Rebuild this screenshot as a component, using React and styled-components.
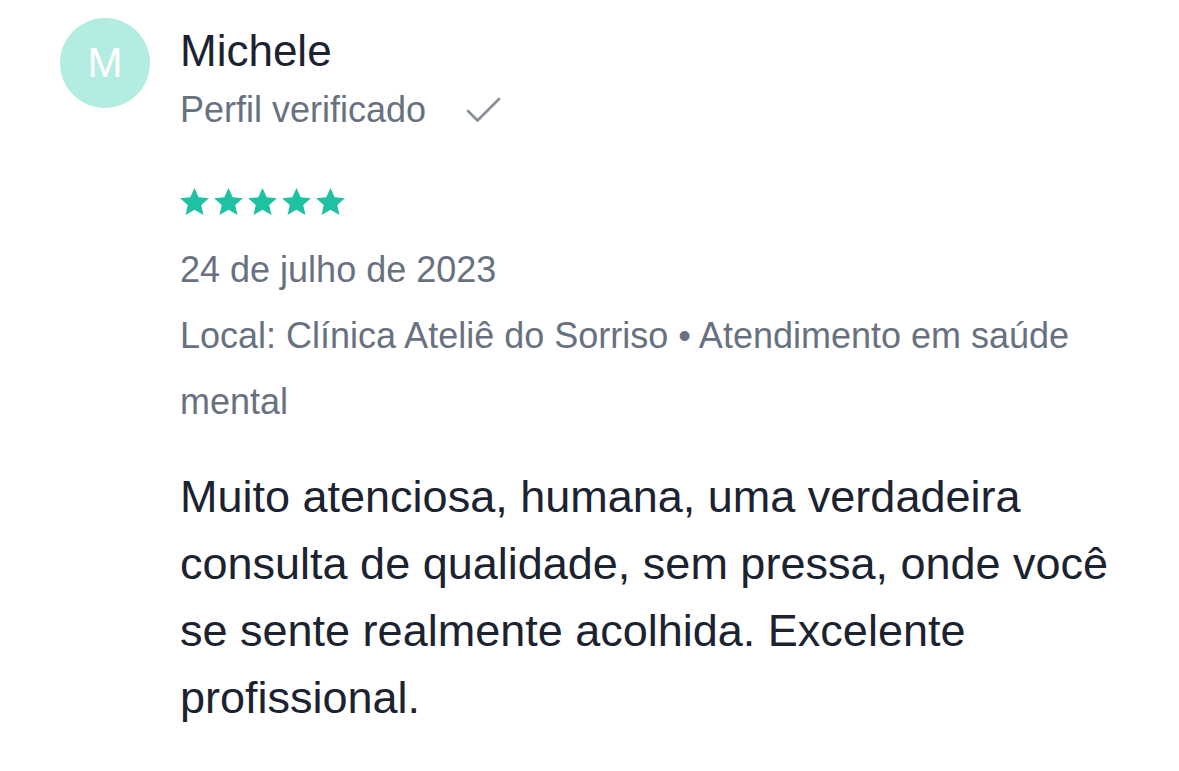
import React from "react";
import styled, { createGlobalStyle } from "styled-components";

const Global = createGlobalStyle`
  html, body { margin: 0; padding: 0; background: #ffffff; }
  body { font-family: "Liberation Sans", Arial, Helvetica, sans-serif; }
`;

const Card = styled.div`
  display: flex;
  gap: 30px;
  padding: 18px 39px 0 60px;
  width: 1179px;
  box-sizing: border-box;
`;

const Avatar = styled.div`
  flex: 0 0 90px;
  width: 90px;
  height: 90px;
  border-radius: 50%;
  background: #b3ece1;
  color: #ffffff;
  display: flex;
  align-items: center;
  justify-content: center;
  font-size: 42px;
  line-height: 1;
`;

const Body = styled.div`
  display: flex;
  flex-direction: column;
  flex: 1;
  min-width: 0;
`;

const Name = styled.div`
  font-size: 44px;
  line-height: 50px;
  color: #1b2230;
  margin-top: 8px;
`;

const Verified = styled.div`
  display: flex;
  align-items: center;
  gap: 40px;
  font-size: 36px;
  line-height: 42px;
  color: #687180;
  margin-top: 13px;
`;

const Stars = styled.div`
  display: flex;
  gap: 5px;
  margin-top: 56px;
`;

const Meta = styled.div`
  font-size: 36px;
  line-height: 66px;
  color: #687180;
  margin-top: ${(p) => p.$top || 0}px;
`;

const Comment = styled.p`
  margin: 28px 0 0 0;
  font-size: 45px;
  line-height: 67px;
  color: #1b2230;
`;

const Star = () => (
  <svg width="29" height="29" viewBox="1 1 22 21">
    <path
      fill="#1ec1a1"
      d="M12 1.2l3.2 7.1 7.7.7-5.8 5.1 1.7 7.6L12 17.8l-6.8 3.9 1.7-7.6L1.1 9l7.7-.7z"
    />
  </svg>
);

const Check = () => (
  <svg width="36" height="26" viewBox="0 0 36 26">
    <path
      d="M2 14l9.5 9.5L33 2"
      fill="none"
      stroke="#8a9099"
      strokeWidth="2.8"
      strokeLinecap="round"
      strokeLinejoin="round"
    />
  </svg>
);

export default function App() {
  return (
    <>
      <Global />
      <Card>
        <Avatar>M</Avatar>
        <Body>
          <Name>Michele</Name>
          <Verified>
            <span>Perfil verificado</span>
            <Check />
          </Verified>
          <Stars>
            {[0, 1, 2, 3, 4].map((i) => (
              <Star key={i} />
            ))}
          </Stars>
          <Meta $top={21}>24 de julho de 2023</Meta>
          <Meta>Local: Clínica Ateliê do Sorriso • Atendimento em saúde mental</Meta>
          <Comment>
            Muito atenciosa, humana, uma verdadeira consulta de qualidade, sem pressa, onde você se sente realmente acolhida. Excelente profissional.
          </Comment>
        </Body>
      </Card>
    </>
  );
}
